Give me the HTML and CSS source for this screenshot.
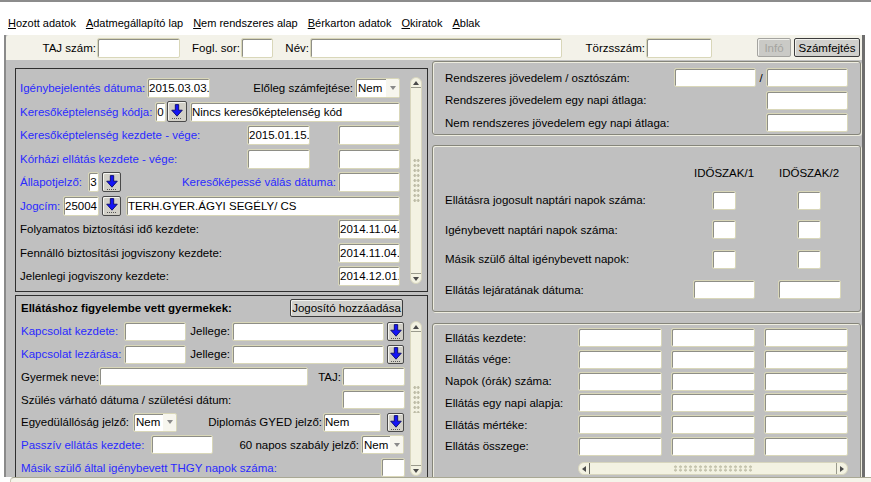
FILE: index.html
```html
<!DOCTYPE html>
<html lang="hu">
<head>
<meta charset="utf-8">
<title>Ellátás számfejtés</title>
<link rel="stylesheet" href="styles.css">
</head>
<body>
<svg class="defs" aria-hidden="true">
  <symbol id="arr" viewBox="0 0 12 15">
    <path d="M4.3 0.6h3.4v5.6h3.6L6 12.2 0.7 6.2h3.6z" fill="#1414f5" stroke="#00005a" stroke-width="0.8" stroke-linejoin="round"/>
    <path d="M1 14.5h10" stroke="#555" stroke-width="1" stroke-dasharray="1 1"/>
  </symbol>
</svg>
<div class="topline"></div>
<nav class="menubar">
  <span class="menu-item"><u>H</u>ozott adatok</span>
  <span class="menu-item"><u>A</u>datmegállapító lap</span>
  <span class="menu-item"><u>N</u>em rendszeres alap</span>
  <span class="menu-item"><u>B</u>érkarton adatok</span>
  <span class="menu-item"><u>O</u>kiratok</span>
  <span class="menu-item"><u>A</u>blak</span>
</nav>
<div class="frame">
  <div class="toolbar">
    <span class="tb-lbl tl-taj">TAJ szám:</span><span class="input tb-in w83"></span>
    <span class="tb-lbl tl-fogl">Fogl. sor:</span><span class="input tb-in w32"></span>
    <span class="tb-lbl tl-nev">Név:</span><span class="input tb-in w252"></span>
    <span class="tb-lbl tl-torzs">Törzsszám:</span><span class="input tb-in w66"></span>
    <button class="btn btn-disabled push w34">Infó</button>
    <button class="btn ml3 w66 mr2">Számfejtés</button>
  </div>
  <div class="workarea">
    <div class="leftcol">
      <section class="panel p1">
        <div class="pcontent">
          <div class="row">
            <span class="lbl blue lw127">Igénybejelentés dátuma:</span>
            <span class="input w63">2015.03.03.</span>
            <span class="lbl push">Előleg számfejtése:</span>
            <span class="select w45 ml2"><span class="sel-val">Nem</span><span class="caret"><span class="tri-down"></span></span></span>
          </div>
          <div class="row">
            <span class="lbl blue lw135">Keresőképtelenség kódja:</span>
            <span class="input w11">0</span>
            <button class="arrow-btn ab-lg ml1"><svg width="12" height="15"><use href="#arr"/></svg></button>
            <span class="input grow ml3">Nincs keresőképtelenség kód</span>
          </div>
          <div class="row">
            <span class="lbl blue">Keresőképtelenség kezdete - vége:</span>
            <span class="input w63 push">2015.01.15.</span>
            <span class="input w62 ml28"></span>
          </div>
          <div class="row">
            <span class="lbl blue">Kórházi ellátás kezdete - vége:</span>
            <span class="input w63 push"></span>
            <span class="input w62 ml28"></span>
          </div>
          <div class="row">
            <span class="lbl blue lw68">Állapotjelző:</span>
            <span class="input w11">3</span>
            <button class="arrow-btn ml3"><svg width="12" height="15"><use href="#arr"/></svg></button>
            <span class="lbl blue push">Keresőképessé válás dátuma:</span>
            <span class="input w62 ml2"></span>
          </div>
          <div class="row">
            <span class="lbl blue lw43">Jogcím:</span>
            <span class="input w36">25004</span>
            <button class="arrow-btn ml3"><svg width="12" height="15"><use href="#arr"/></svg></button>
            <span class="input grow ml5">TERH.GYER.ÁGYI SEGÉLY/ CS</span>
          </div>
          <div class="row">
            <span class="lbl">Folyamatos biztosítási idő kezdete:</span>
            <span class="input w62 push">2014.11.04.</span>
          </div>
          <div class="row">
            <span class="lbl">Fennálló biztosítási jogviszony kezdete:</span>
            <span class="input w62 push">2014.11.04.</span>
          </div>
          <div class="row">
            <span class="lbl">Jelenlegi jogviszony kezdete:</span>
            <span class="input w62 push">2014.12.01.</span>
          </div>
        </div>
        <div class="vscroll vs1">
          <div class="sb-cap up"><span class="tri-up"></span></div>
          <div class="sb-track"><span class="grip-v"></span></div>
          <div class="sb-cap down"><span class="tri-down dark"></span></div>
        </div>
      </section>

      <section class="panel p2">
        <div class="pcontent">
          <div class="row hdr">
            <span class="lbl bold">Ellátáshoz figyelembe vett gyermekek:</span>
            <button class="btn push w113 mr2">Jogosító hozzáadása</button>
          </div>
          <div class="row">
            <span class="lbl blue lw103">Kapcsolat kezdete:</span>
            <span class="input w62"></span>
            <span class="lbl lbl-r lw46">Jellege:</span>
            <span class="input grow"></span>
            <button class="arrow-btn ab-sm ml3 mr1"><svg width="12" height="15"><use href="#arr"/></svg></button>
          </div>
          <div class="row">
            <span class="lbl blue lw103">Kapcsolat lezárása:</span>
            <span class="input w62"></span>
            <span class="lbl lbl-r lw46">Jellege:</span>
            <span class="input grow"></span>
            <button class="arrow-btn ab-sm ml3 mr1"><svg width="12" height="15"><use href="#arr"/></svg></button>
          </div>
          <div class="row">
            <span class="lbl lw78">Gyermek neve:</span>
            <span class="input w209"></span>
            <span class="lbl push">TAJ:</span>
            <span class="input w63 ml1"></span>
          </div>
          <div class="row">
            <span class="lbl">Szülés várható dátuma / születési dátum:</span>
            <span class="input w63 push"></span>
          </div>
          <div class="row">
            <span class="lbl lw112">Egyedülállóság jelző:</span>
            <span class="select w44"><span class="sel-val">Nem</span><span class="caret"><span class="tri-down"></span></span></span>
            <span class="lbl push">Diplomás GYED jelző:</span>
            <span class="input w58 ml1">Nem</span>
            <button class="arrow-btn ab-sm ml6 mr1"><svg width="12" height="15"><use href="#arr"/></svg></button>
          </div>
          <div class="row">
            <span class="lbl blue lw130">Passzív ellátás kezdete:</span>
            <span class="input w62"></span>
            <span class="lbl push">60 napos szabály jelző:</span>
            <span class="select w43 ml2 mr1"><span class="sel-val">Nem</span><span class="caret"><span class="tri-down"></span></span></span>
          </div>
          <div class="row">
            <span class="lbl blue">Másik szülő által igénybevett THGY napok száma:</span>
            <span class="input w24 push"></span>
          </div>
        </div>
        <div class="vscroll vs2">
          <div class="sb-cap up"><span class="tri-up"></span></div>
          <div class="sb-track"><span class="grip-v short"></span></div>
          <div class="sb-cap down"><span class="tri-down dark"></span></div>
        </div>
      </section>
    </div>

    <div class="rightcol">
      <section class="rpanel pa">
        <div class="row rrow">
          <span class="lbl">Rendszeres jövedelem / osztószám:</span>
          <span class="input w82 push"></span>
          <span class="slash">/</span>
          <span class="input w82"></span>
        </div>
        <div class="row rrow">
          <span class="lbl">Rendszeres jövedelem egy napi átlaga:</span>
          <span class="input w82 push"></span>
        </div>
        <div class="row rrow">
          <span class="lbl">Nem rendszeres jövedelem egy napi átlaga:</span>
          <span class="input w82 push"></span>
        </div>
      </section>

      <section class="rpanel pb">
        <span></span>
        <span class="colhead">IDŐSZAK/1</span>
        <span class="colhead">IDŐSZAK/2</span>

        <span class="lbl">Ellátásra jogosult naptári napok száma:</span>
        <span class="input w24 cell-c"></span>
        <span class="input w24 cell-c"></span>

        <span class="lbl">Igénybevett naptári napok száma:</span>
        <span class="input w24 cell-c"></span>
        <span class="input w24 cell-c"></span>

        <span class="lbl">Másik szülő által igénybevett napok:</span>
        <span class="input w24 cell-c"></span>
        <span class="input w24 cell-c"></span>

        <span class="lbl">Ellátás lejáratának dátuma:</span>
        <span class="input w62 cell-c"></span>
        <span class="input w63 cell-c"></span>
      </section>

      <section class="rpanel pc">
        <span class="lbl">Ellátás kezdete:</span>
        <span class="input"></span><span class="input"></span><span class="input"></span>
        <span class="lbl">Ellátás vége:</span>
        <span class="input"></span><span class="input"></span><span class="input"></span>
        <span class="lbl">Napok (órák) száma:</span>
        <span class="input"></span><span class="input"></span><span class="input"></span>
        <span class="lbl">Ellátás egy napi alapja:</span>
        <span class="input"></span><span class="input"></span><span class="input"></span>
        <span class="lbl">Ellátás mértéke:</span>
        <span class="input"></span><span class="input"></span><span class="input"></span>
        <span class="lbl">Ellátás összege:</span>
        <span class="input"></span><span class="input"></span><span class="input"></span>
        <div class="hscroll">
          <div class="hs-cap left"><span class="tri-left"></span></div>
          <div class="hs-track"><span class="grip-h"></span></div>
          <div class="hs-cap right"><span class="tri-right"></span></div>
        </div>
      </section>
    </div>
  </div>
</div>
<div class="bottombar"></div>
</body>
</html>
```

FILE: styles.css
```css
* { box-sizing: border-box; }
html, body { margin: 0; padding: 0; background: #fff; }
body {
  width: 871px;
  height: 482px;
  overflow: hidden;
  font-family: "Liberation Sans", Arial, sans-serif;
  font-size: 11.5px;
  color: #000;
}
.defs { position: absolute; width: 0; height: 0; }

.topline { height: 2px; background: #8c8c8c; }

.menubar {
  height: 33px;
  display: flex;
  align-items: flex-end;
  gap: 10px;
  padding: 0 0 5px 8px;
  font-size: 11px;
  line-height: 13px;
}
.menu-item { white-space: nowrap; }
.menu-item u { text-decoration-thickness: 1px; text-underline-offset: 1px; }

.frame {
  margin-left: 4px;
  width: 861px;
  height: 442px;
  border-left: 2px solid #8a8a8a;
  border-right: 3px solid #6e6e6e;
  background: #c0c0c0;
  display: flex;
  flex-direction: column;
  overflow: hidden;
}

.toolbar {
  flex: none;
  height: 25px;
  display: flex;
  align-items: center;
  background: #f3f2e9;
  border-top-left-radius: 3px;
}
.tb-lbl { text-align: right; padding-right: 1px; white-space: nowrap; flex: none; }
.tl-taj { width: 91px; }
.tl-fogl { width: 61px; }
.tl-nev { width: 37px; }
.tl-torzs { width: 84px; }
.tb-in { height: 19px; }

.workarea {
  flex: 1;
  min-height: 0;
  display: flex;
  gap: 4px;
  padding-left: 9px;
  overflow: hidden;
}
.leftcol {
  width: 413px;
  flex: none;
  display: flex;
  flex-direction: column;
  gap: 3px;
  padding-top: 8px;
}
.rightcol {
  width: 429px;
  flex: none;
  display: flex;
  flex-direction: column;
  padding-top: 1px;
}

/* left dark panels */
.panel {
  flex: none;
  display: flex;
  border: 1px solid #2e2e2e;
}
.p1 { height: 224px; }
.p2 { height: 186px; }
.pcontent {
  flex: 1;
  min-width: 0;
  display: flex;
  flex-direction: column;
}
.p1 .pcontent { padding: 9px 10px 0 4px; gap: 3.5px; }
.p2 .pcontent { padding: 3px 5px 0 5px; gap: 3.7px; }

.row { display: flex; align-items: center; height: 20px; flex: none; }
.p2 .row { height: 19px; }
.p2 .row.hdr { height: 18px; margin-bottom: 1.3px; }

.lbl { white-space: nowrap; flex: none; overflow: visible; }
.lbl-r { text-align: right; padding-right: 2px; }
.blue { color: #2a2aff; }
.bold { font-weight: bold; }

.lw43 { width: 43px; }
.lw46 { width: 46px; }
.lw68 { width: 68px; }
.lw78 { width: 78px; }
.lw103 { width: 103px; }
.lw112 { width: 112px; }
.lw127 { width: 127px; }
.lw130 { width: 130px; }
.lw135 { width: 135px; }

.input {
  flex: none;
  display: flex;
  align-items: center;
  height: 20px;
  padding: 0 1px;
  background: #fff;
  border: 1px solid #d9d7b9;
  border-radius: 2px;
  box-shadow: inset 1px 1px 0 #8e8e86;
  white-space: nowrap;
  overflow: hidden;
}
.p2 .input { height: 19px; }
.input.w11 { padding: 0; justify-content: center; }
.input.grow { flex: 1 1 0; min-width: 0; }

.push { margin-left: auto; }
.ml1 { margin-left: 1px; }
.ml2 { margin-left: 2px; }
.ml3 { margin-left: 3px; }
.ml5 { margin-left: 5px; }
.ml6 { margin-left: 6px; }
.ml28 { margin-left: 28px; }
.mr1 { margin-right: 1px; }
.mr2 { margin-right: 2px; }

.w11 { width: 11px; }
.w24 { width: 24px; }
.w32 { width: 32px; }
.w34 { width: 34px; }
.w36 { width: 36px; }
.w43 { width: 43px; }
.w44 { width: 44px; }
.w45 { width: 45px; }
.w58 { width: 58px; }
.w62 { width: 62px; }
.w63 { width: 63px; }
.w66 { width: 66px; }
.w82 { width: 82px; }
.w83 { width: 83px; }
.w113 { width: 113px; }
.w209 { width: 209px; }
.w252 { width: 252px; }

.select {
  flex: none;
  display: flex;
  height: 20px;
  background: #fff;
  border: 1px solid #d9d7b9;
  border-radius: 2px;
  box-shadow: inset 1px 1px 0 #8e8e86;
  overflow: hidden;
}
.p2 .select { height: 19px; }
.sel-val { flex: 1; display: flex; align-items: center; padding-left: 2px; }
.caret {
  width: 13px;
  display: flex;
  align-items: center;
  justify-content: center;
  background: #f7f6ee;
}
.tri-down {
  width: 0; height: 0;
  border-left: 3.5px solid transparent;
  border-right: 3.5px solid transparent;
  border-top: 4px solid #8a8a8a;
}
.tri-down.dark { border-top-color: #4a4a4a; }
.tri-up {
  width: 0; height: 0;
  border-left: 3.5px solid transparent;
  border-right: 3.5px solid transparent;
  border-bottom: 4px solid #4a4a4a;
}
.tri-left {
  width: 0; height: 0;
  border-top: 3.5px solid transparent;
  border-bottom: 3.5px solid transparent;
  border-right: 4px solid #4a4a4a;
}
.tri-right {
  width: 0; height: 0;
  border-top: 3.5px solid transparent;
  border-bottom: 3.5px solid transparent;
  border-left: 4px solid #4a4a4a;
}

.arrow-btn {
  flex: none;
  width: 19px;
  height: 20px;
  padding: 0;
  display: flex;
  align-items: center;
  justify-content: center;
  background: #d2d0c8;
  border: 1px solid #4a4a4a;
  border-radius: 2px;
  box-shadow: inset 1px 1px 0 #f4f4f0;
}
.arrow-btn.ab-lg { width: 20px; height: 21px; }
.arrow-btn.ab-sm { width: 17px; height: 19px; }
.arrow-btn svg { display: block; }

.btn {
  flex: none;
  height: 19px;
  padding: 0;
  font: inherit;
  color: #000;
  background: #d0d0cc;
  border: 1px solid #3c3c3c;
  border-radius: 2px;
  box-shadow: inset 1px 1px 0 #f2f2ee;
  white-space: nowrap;
}
.p2 .btn { height: 18px; }
.btn-disabled {
  color: #a4a4a0;
  background: #cacac6;
  border-color: #a4a4a0;
}

/* vertical scrollbars */
.vscroll {
  flex: none;
  width: 12px;
  margin-right: 5px;
  display: flex;
  flex-direction: column;
  background: #f3f2e2;
  border: 1px solid #d8d6be;
  border-radius: 6px;
}
.vs1 { margin-top: 8px; margin-bottom: 7px; }
.vs2 { margin-top: 25px; margin-bottom: 4px; }
.sb-cap {
  flex: none;
  height: 10px;
  display: flex;
  align-items: center;
  justify-content: center;
}
.sb-cap.up { border-bottom: 1px solid #9a9a8c; }
.sb-cap.down { border-top: 1px solid #9a9a8c; }
.sb-track {
  flex: 1;
  display: flex;
  align-items: center;
  justify-content: center;
}
.grip-v {
  width: 7px;
  height: 45px;
  background-image: radial-gradient(circle, #bdbca6 35%, transparent 55%);
  background-size: 3.5px 5px;
}
.grip-v.short { height: 28px; }

/* right panels */
.rpanel {
  flex: none;
  border: 1px solid #85857a;
  border-radius: 3px;
  box-shadow: inset 1px 1px 0 #eeeddf, 1px 1px 0 #eeeddf;
}
.pa {
  height: 74px;
  display: flex;
  flex-direction: column;
  gap: 3.5px;
  padding: 6px 12px 0 12px;
}
.rrow { height: 19px; }
.rrow .input { height: 19px; }
.slash { width: 10px; text-align: center; flex: none; }

.pb {
  height: 167px;
  margin-top: 10px;
  display: grid;
  grid-template-columns: 1fr 66px 66px;
  grid-template-rows: 14px 19px 19px 19px 21px;
  column-gap: 19px;
  row-gap: 10.5px;
  align-items: center;
  padding: 20px 18px 0 12px;
}
.pb .input { height: 19px; }
.colhead { text-align: center; white-space: nowrap; }
.cell-c { justify-self: center; }

.pc {
  height: 175px;
  margin-top: 11px;
  display: grid;
  grid-template-columns: 1fr 84px 84px 84px;
  grid-auto-rows: 19px;
  column-gap: 9px;
  row-gap: 2.8px;
  align-items: center;
  padding: 4px 12px 0 12px;
}
.pc .input { height: 19px; }

.hscroll {
  grid-column: 2 / 5;
  margin-top: 1px;
  height: 13px;
  display: flex;
  background: #f3f2e2;
  border: 1px solid #d8d6be;
  border-radius: 6px;
}
.hs-cap {
  flex: none;
  width: 11px;
  display: flex;
  align-items: center;
  justify-content: center;
}
.hs-cap.left { border-right: 1px solid #6a6a60; }
.hs-cap.right { border-left: 1px solid #9a9a8c; }
.hs-track {
  flex: 1;
  display: flex;
  align-items: center;
  justify-content: center;
}
.grip-h {
  width: 80px;
  height: 7px;
  background-image: radial-gradient(circle, #c4c3ad 35%, transparent 55%);
  background-size: 5px 3.5px;
}

.bottombar {
  margin-left: 10px;
  height: 5px;
  background: #f5f4ea;
  border-top: 1px solid #a9a894;
  border-left: 1px solid #c8c7b4;
  border-top-left-radius: 4px;
}
```
